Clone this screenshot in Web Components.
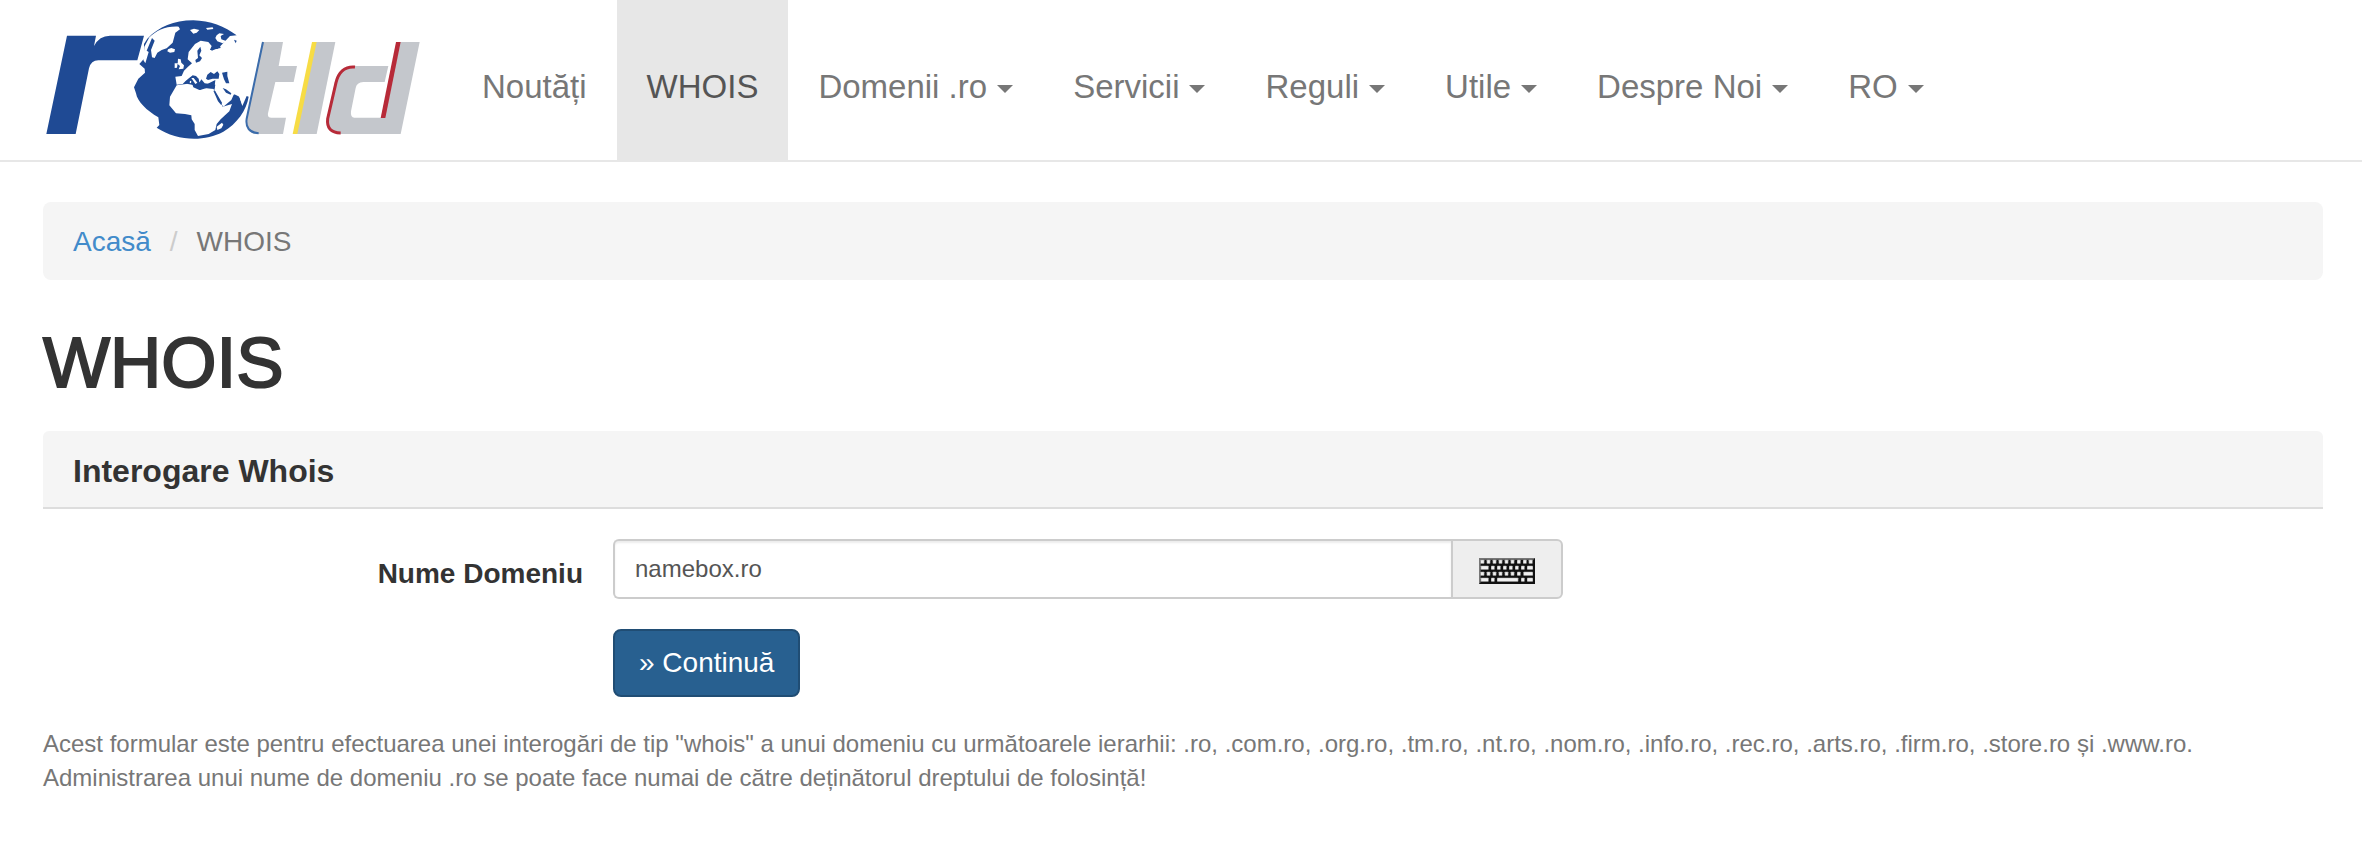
<!DOCTYPE html>
<html lang="ro">
<head>
<meta charset="utf-8">
<meta name="viewport" content="width=device-width, initial-scale=1">
<title>WHOIS</title>
<style>
  body {
    margin: 0;
    background: #fff;
    color: #333;
    font-family: "Liberation Sans", Arial, sans-serif;
    font-size: 28px;
    line-height: 40px;
  }
  main {
    padding: 40px 39px 40px 43px;
  }
</style>
</head>
<body>

<rt-navbar>
  <rt-logo slot="brand"></rt-logo>
  <rt-nav-item>Noutăți</rt-nav-item>
  <rt-nav-item active>WHOIS</rt-nav-item>
  <rt-nav-item dropdown>Domenii .ro</rt-nav-item>
  <rt-nav-item dropdown>Servicii</rt-nav-item>
  <rt-nav-item dropdown>Reguli</rt-nav-item>
  <rt-nav-item dropdown>Utile</rt-nav-item>
  <rt-nav-item dropdown>Despre Noi</rt-nav-item>
  <rt-nav-item dropdown>RO</rt-nav-item>
</rt-navbar>

<main>
  <rt-breadcrumb>
    <span slot="parent">Acasă</span>
    <span>WHOIS</span>
  </rt-breadcrumb>
  <rt-title>WHOIS</rt-title>
  <rt-panel>
    <span slot="heading">Interogare Whois</span>
    <rt-whois-form value="namebox.ro"></rt-whois-form>
  </rt-panel>
  <rt-help>Acest formular este pentru efectuarea unei interogări de tip "whois" a unui domeniu cu următoarele ierarhii: .ro, .com.ro, .org.ro, .tm.ro, .nt.ro, .nom.ro, .info.ro, .rec.ro, .arts.ro, .firm.ro, .store.ro și .www.ro.<br>Administrarea unui nume de domeniu .ro se poate face numai de către deținătorul dreptului de folosință!</rt-help>
</main>

<script>
class RtNavbar extends HTMLElement {
  constructor() {
    super();
    this.attachShadow({ mode: "open" });
    this.shadowRoot.innerHTML = `
      <style>
        :host {
          display: block;
          border-bottom: 2px solid #e7e7e7;
        }
        nav {
          display: flex;
          flex-wrap: wrap;
          padding-left: 42px;
        }
        .brand {
          margin-right: 28px;
        }
      </style>
      <nav>
        <div class="brand"><slot name="brand"></slot></div>
        <slot></slot>
      </nav>
    `;
  }
}

class RtNavItem extends HTMLElement {
  constructor() {
    super();
    this.attachShadow({ mode: "open" });
  }

  connectedCallback() {
    const caret = this.hasAttribute("dropdown") ? `<span class="caret"></span>` : "";
    this.shadowRoot.innerHTML = `
      <style>
        :host {
          display: block;
        }
        a {
          display: flex;
          align-items: center;
          gap: 10px;
          padding: 67px 30px 53px;
          color: #777;
          font-size: 33px;
          line-height: 40px;
          text-decoration: none;
          white-space: nowrap;
        }
        a:hover {
          color: #333;
        }
        :host([active]) a {
          background: #e7e7e7;
          color: #555;
        }
        .caret {
          margin-top: 4px;
          border-top: 8px solid;
          border-left: 8px solid transparent;
          border-right: 8px solid transparent;
        }
      </style>
      <a href="#"><slot></slot>${caret}</a>
    `;
  }
}

class RtLogo extends HTMLElement {
  constructor() {
    super();
    this.attachShadow({ mode: "open" });
    this.shadowRoot.innerHTML = `
      <style>
        :host, a, svg {
          display: block;
        }
        svg {
          width: 382px;
          height: 160px;
        }
      </style>
      <a href="#" aria-label="RoTLD">
        <svg viewBox="36 0 1146 480" aria-hidden="true">
          <!-- left mark -->
          <path fill="#1f4a94" d="M111 107H198L192 138Q208 107 240 107H342L322 181H205Q183 181 177 205L137 402H49Z"/>
          <!-- globe: oceans -->
          <path fill="#1f4a94" d="M342 132L352 116C388 80 430 61 490 61C540 62 585 80 620 106L600 108L560 150L580 220L600 285L625 281L637 318L650 288L656 290C650 330 620 372 580 395C520 427 440 422 380 383L388 375L385 352C350 332 322 305 318 280L312 262L325 236L345 218L344 206L328 192L342 176Z"/>
          <!-- globe: land -->
          <g fill="#fff">
            <path d="M358 112C380 92 405 78 446 80L450 88L436 98L428 128L410 145L395 150L382 158L374 174L366 172L363 150L374 122L366 114L350 152L356 156L346 190L340 180L343 140Z"/>
            <path d="M414 148L424 144L435 148L433 156L420 158L412 154Z"/>
            <path d="M480 90L492 86L508 90L500 98L490 101ZM528 84L548 82L550 87L532 89ZM560 106L568 100L582 102L572 108L574 118L590 124L578 130L562 124L556 114Z"/>
            <path d="M444 176L452 178L454 188L462 196L460 206L446 208L450 198L443 192ZM434 190L443 190L441 203L434 204Z"/>
            <path d="M462 212L474 200L486 190L473 178L476 156L495 132L512 122L535 126L545 138L540 150L565 146L600 128L640 124L670 180L660 284L645 288L636 312L628 290L612 282L604 300L580 320L566 300L553 268L556 240L532 252L520 256L508 246L506 236L498 228L488 226L478 234L466 244L458 252L440 254L436 230L455 228Z"/>
            <path d="M440 256L468 252L486 250L490 262L508 270L522 264L550 266L565 292L578 320L606 312L598 334L572 358L560 372L556 390L536 402L504 408L494 390L494 372L485 358L484 346L465 342L438 340L418 316L420 290Z"/>
            <path d="M576 368L580 374L574 385L562 390L560 380Z"/>
          </g>
          <!-- globe: inland seas -->
          <g fill="#1f4a94">
            <path d="M502 152L511 140L514 152L508 166L516 174L510 184L498 188L496 180L504 174Z"/>
            <path d="M540 148L555 140L570 138L572 144L556 147L546 152Z"/>
            <path d="M532 224L542 216L552 222L562 214L568 222L566 236L548 236L534 240L528 236Z"/>
            <path d="M576 218L592 215L592 228L598 250L588 250L582 238Z"/>
            <path d="M466 246L478 234L490 228L500 240L508 248L514 238L524 250L540 252L556 254L554 266L530 264L510 270L494 256L474 252Z"/>
            <path d="M550 272L556 274L576 308L574 316L564 304ZM578 264L588 268L604 280L602 284L588 278Z"/>
            <path d="M612 119L620 122L617 130Z"/>
          </g>
          <path fill="#fff" d="M484 234L491 234L502 248L496 252L488 240ZM480 242L484 244L483 250L479 248Z"/>
          <!-- right mark -->
          <g fill="#c4c7cc">
            <path d="M696 126H759L746 198H801L791 246H736L714 340Q712 353 724 353H768L759 402H676Q646 396 650 360Z"/>
            <path d="M852 126H916L860 402H796Z"/>
            <path fill-rule="evenodd" d="M1105 126H1169L1112 402H925Q886 396 892 356L914 248Q924 200 970 198H1075L1064 246H1000Q980 248 977 264L963 334Q961 353 973 353H1056Z"/>
          </g>
          <path fill="none" stroke="#3b6cab" stroke-width="6" d="M699 126L650 356Q644 396 686 400"/>
          <path fill="#f7dc45" d="M846 126H860L802 402H788Z"/>
          <path fill="#b72a38" d="M1098 126H1112L1066 354H1052Z"/>
          <path fill="none" stroke="#b72a38" stroke-width="9" d="M975 201C944 198 925 218 918 248L893 356Q888 398 932 399"/>
        </svg>
      </a>
    `;
  }
}

class RtBreadcrumb extends HTMLElement {
  constructor() {
    super();
    this.attachShadow({ mode: "open" });
    this.shadowRoot.innerHTML = `
      <style>
        :host {
          display: block;
        }
        ol {
          display: flex;
          gap: 19px;
          margin: 0;
          padding: 20px 30px 18px;
          list-style: none;
          background: #f5f5f5;
          border-radius: 8px;
          color: #777;
        }
        a {
          color: #428bca;
          text-decoration: none;
        }
        .divider {
          color: #ccc;
        }
      </style>
      <ol>
        <li><a href="#"><slot name="parent"></slot></a></li>
        <li class="divider" aria-hidden="true">/</li>
        <li><slot></slot></li>
      </ol>
    `;
  }
}

class RtTitle extends HTMLElement {
  constructor() {
    super();
    this.attachShadow({ mode: "open" });
    this.shadowRoot.innerHTML = `
      <style>
        :host {
          display: block;
        }
        h1 {
          margin: 43px 0 28px;
          font-size: 71px;
          line-height: 80px;
          font-weight: 400;
          /* medium weight between regular and bold */
          -webkit-text-stroke: 2px currentColor;
        }
      </style>
      <h1><slot></slot></h1>
    `;
  }
}

class RtPanel extends HTMLElement {
  constructor() {
    super();
    this.attachShadow({ mode: "open" });
    this.shadowRoot.innerHTML = `
      <style>
        :host {
          display: block;
        }
        h2 {
          margin: 0;
          padding: 22px 30px 18px;
          background: #f5f5f5;
          border-bottom: 2px solid #ddd;
          border-radius: 6px 6px 0 0;
          font-size: 32px;
          line-height: 36px;
        }
        .body {
          padding: 30px 0;
        }
      </style>
      <section>
        <h2><slot name="heading"></slot></h2>
        <div class="body"><slot></slot></div>
      </section>
    `;
  }
}

class RtWhoisForm extends HTMLElement {
  constructor() {
    super();
    this.attachShadow({ mode: "open" });
  }

  connectedCallback() {
    this.render();
    this.shadowRoot.querySelector("form").addEventListener("submit", e => e.preventDefault());
    this.shadowRoot.querySelector(".addon").addEventListener("click", () => {
      this.shadowRoot.getElementById("domain").focus();
    });
  }

  keys() {
    // [x, width] of every key, one list per row
    const rows = [
      [[31, 12], [50, 11], [68, 11], [86, 11], [104, 11], [122, 11], [141, 11], [159, 11], [176, 12]],
      [[32, 24], [63, 11], [81, 11], [99, 11], [117, 11], [135, 11], [153, 11], [171, 18]],
      [[31, 12], [50, 11], [68, 11], [86, 11], [104, 11], [122, 11], [141, 11], [160, 29]],
      [[32, 24], [63, 11], [81, 64], [153, 11], [171, 18]]
    ];
    return rows.map((row, i) => row.map(([x, w]) => `
      <rect x="${x}" y="${29 + i * 18}" width="${w}" height="12" rx="2" fill="#b4b4b4"/>
      <rect x="${x + 2}" y="${31 + i * 18}" width="${w - 4}" height="8" rx="1" fill="#f0f0f0"/>
    `).join("")).join("");
  }

  render() {
    this.shadowRoot.innerHTML = `
      <style>
        :host {
          display: block;
        }
        form {
          display: grid;
          grid-template-columns: calc(25% - 30px) calc(100% * 5 / 12);
          gap: 30px;
        }
        label {
          padding-top: 15px;
          font-weight: 700;
          text-align: right;
        }
        .group {
          display: flex;
        }
        input {
          flex: 1;
          min-width: 0;
          height: 60px;
          box-sizing: border-box;
          padding: 0 20px;
          border: 2px solid #ccc;
          border-right: 0;
          border-radius: 6px 0 0 6px;
          box-shadow: inset 0 2px 2px rgba(0, 0, 0, 0.075);
          background: #fff;
          color: #555;
          font-family: inherit;
          font-size: 24px;
          outline: none;
        }
        .addon {
          display: flex;
          align-items: center;
          padding: 0 26px;
          border: 2px solid #ccc;
          border-radius: 0 6px 6px 0;
          background: #eee;
        }
        .addon svg {
          display: block;
          width: 56px;
          height: 26px;
          margin-top: 4px;
        }
        .submit {
          grid-column: 2;
          justify-self: start;
          padding: 12px 24px;
          border: 2px solid #204d74;
          border-radius: 8px;
          background: #286090;
          color: #fff;
          font-family: inherit;
          font-size: 28px;
          line-height: 40px;
        }
      </style>
      <form>
        <label for="domain">Nume Domeniu</label>
        <div class="group">
          <input id="domain" type="text" value="${this.getAttribute("value") || ""}">
          <button class="addon" type="button" aria-label="Tastatură">
            <svg viewBox="27 24 168 78" aria-hidden="true">
              <rect x="27" y="24" width="168" height="78" fill="#111"/>
              <path d="M27 24H195L190 29H32V97L27 102Z" fill="#777"/>
              ${this.keys()}
            </svg>
          </button>
        </div>
        <button class="submit" type="submit">» Continuă</button>
      </form>
    `;
  }
}

class RtHelp extends HTMLElement {
  constructor() {
    super();
    this.attachShadow({ mode: "open" });
    this.shadowRoot.innerHTML = `
      <style>
        :host {
          display: block;
          color: #777;
          font-size: 24px;
          line-height: 34px;
        }
        p {
          margin: 0;
        }
      </style>
      <p><slot></slot></p>
    `;
  }
}

customElements.define("rt-navbar", RtNavbar);
customElements.define("rt-nav-item", RtNavItem);
customElements.define("rt-logo", RtLogo);
customElements.define("rt-breadcrumb", RtBreadcrumb);
customElements.define("rt-title", RtTitle);
customElements.define("rt-panel", RtPanel);
customElements.define("rt-whois-form", RtWhoisForm);
customElements.define("rt-help", RtHelp);
</script>
</body>
</html>
